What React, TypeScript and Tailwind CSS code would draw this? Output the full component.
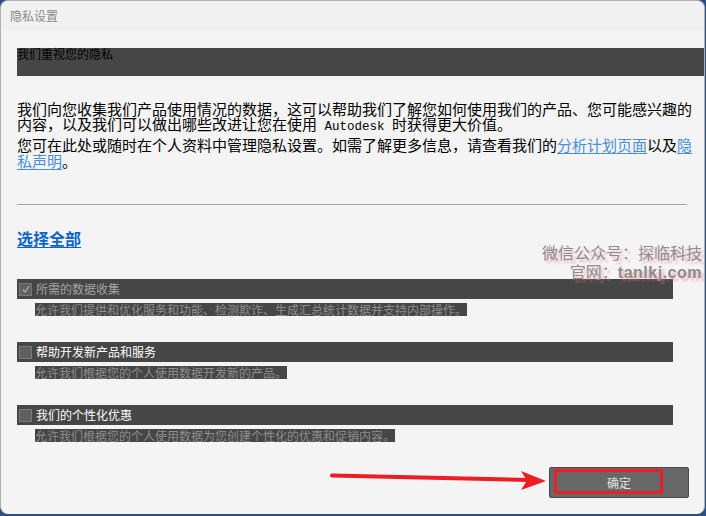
import React from 'react'

const cjk = { fontFamily: '"Noto Sans CJK SC", "Noto Sans", sans-serif' }

interface ConsentRowProps {
  label: string
  description: string
  checked?: boolean
  disabled?: boolean
}

function ConsentRow({ label, description, checked = false, disabled = false }: ConsentRowProps) {
  return (
    <div className="flex flex-col">
      <div className="flex h-[20px] w-[656px] items-center bg-[#464646] pl-[2px]">
        <span className="flex h-[13px] w-[13px] items-center justify-center border border-[#7a7a7a] bg-[#606060]">
          {checked && (
            <svg viewBox="0 0 12 12" className="h-[10px] w-[10px]">
              <polyline points="2,6.5 5,9.5 10,2.5" fill="none" stroke="#9a9a9a" strokeWidth="2" />
            </svg>
          )}
        </span>
        <span className={`ml-[4px] text-[12px] leading-[12px] ${disabled ? 'text-[#a3a3a3]' : 'text-white'}`}>
          {label}
        </span>
      </div>
      <div className="mt-[4px] flex h-[13px] pl-[18px]">
        <span className="flex h-[13px] items-center bg-[#464646] text-[12px] leading-[13px] text-[#8e8e8e]">
          {description}
        </span>
      </div>
    </div>
  )
}

const link = 'text-[#4a8fd8] underline underline-offset-2'

export default function App() {
  return (
    <div className="h-[516px] w-[706px] overflow-hidden bg-[#2f4f82]" style={cjk}>
      <div className="relative flex h-[514px] w-[705px] flex-col overflow-hidden rounded-lg border-x border-t border-[#a9b1b3] bg-[#f4f4f4]">
        {/* title bar */}
        <div className="flex h-[30px] shrink-0 items-center bg-[#f1f1f1] pl-[9px] text-[12px] leading-[12px] text-[#8a8a8a]">
          隐私设置
        </div>

        <div className="flex flex-col pl-[16px]">
          <div className="mt-[17px] h-[28px] bg-[#464646] text-[12px] leading-[12px] text-black">我们重视您的隐私</div>

          <div className="mt-[25px] flex flex-col text-[15px] text-black">
            <div className="h-[15px] whitespace-nowrap leading-[15px]">
              我们向您收集我们产品使用情况的数据，这可以帮助我们了解您如何使用我们的产品、您可能感兴趣的
            </div>
            <div className="h-[15px] whitespace-nowrap leading-[15px]">
              内容，以及我们可以做出哪些改进让您在使用
              <span className="font-['Liberation_Mono'] text-[12.5px] leading-[12px]"> Autodesk </span>
              时获得更大价值。
            </div>
          </div>

          <div className="mt-[6px] flex flex-col text-[15px] text-black">
            <div className="h-[16px] whitespace-nowrap leading-[16px]">
              您可在此处或随时在个人资料中管理隐私设置。如需了解更多信息，请查看我们的
              <span className={link}>分析计划页面</span>以及<span className={link}>隐</span>
            </div>
            <div className="h-[16px] whitespace-nowrap leading-[16px]">
              <span className={link}>私声明</span>。
            </div>
          </div>

          <div className="mr-[17px] mt-[35px] h-px bg-[#a3a3a3]" />

          <div className="mt-[25px] h-[16px] text-[16px] font-bold leading-[16px] text-[#0a64c8] underline underline-offset-2">
            选择全部
          </div>

          <div className="mt-[33px] flex flex-col gap-[26px]">
            <ConsentRow
              label="所需的数据收集"
              description="允许我们提供和优化服务和功能、检测欺诈、生成汇总统计数据并支持内部操作。"
              checked
              disabled
            />
            <ConsentRow label="帮助开发新产品和服务" description="允许我们根据您的个人使用数据开发新的产品。" />
            <ConsentRow label="我们的个性化优惠" description="允许我们根据您的个人使用数据为您创建个性化的优惠和促销内容。" />
          </div>

          <div className="mr-[15px] mt-[25px] flex justify-end">
            <button className="relative flex h-[31px] w-[140px] items-center justify-center rounded-[2px] border border-[#4a4a4a] bg-[#676767] text-[12px] leading-[12px] text-[#e2e2e2]">
              确定
              <span className="absolute left-[4px] top-[1px] h-[25px] w-[109px] border-[3px] border-[#e8202a]" />
            </button>
          </div>
        </div>

        {/* watermark */}
        <div className="absolute right-[2px] top-[242px] flex flex-col items-end text-[16px] leading-[19px] text-[#8c8c8c] [text-shadow:3px_3px_2px_rgba(240,120,135,0.45)]">
          <span>微信公众号：探临科技</span>
          <span>
            官网：<span className="font-['Liberation_Sans'] font-bold tracking-[0.5px]">tanlkj.com</span>
          </span>
        </div>

        {/* annotation arrow */}
        <svg className="absolute left-[320px] top-[460px]" width="240" height="40" viewBox="0 0 240 40">
          <line x1="11" y1="14.5" x2="206" y2="19" stroke="#ee1c25" strokeWidth="4" strokeLinecap="round" />
          <polygon points="200,10 225,20 200,29 206,19.5" fill="#ee1c25" />
        </svg>
      </div>
    </div>
  )
}
